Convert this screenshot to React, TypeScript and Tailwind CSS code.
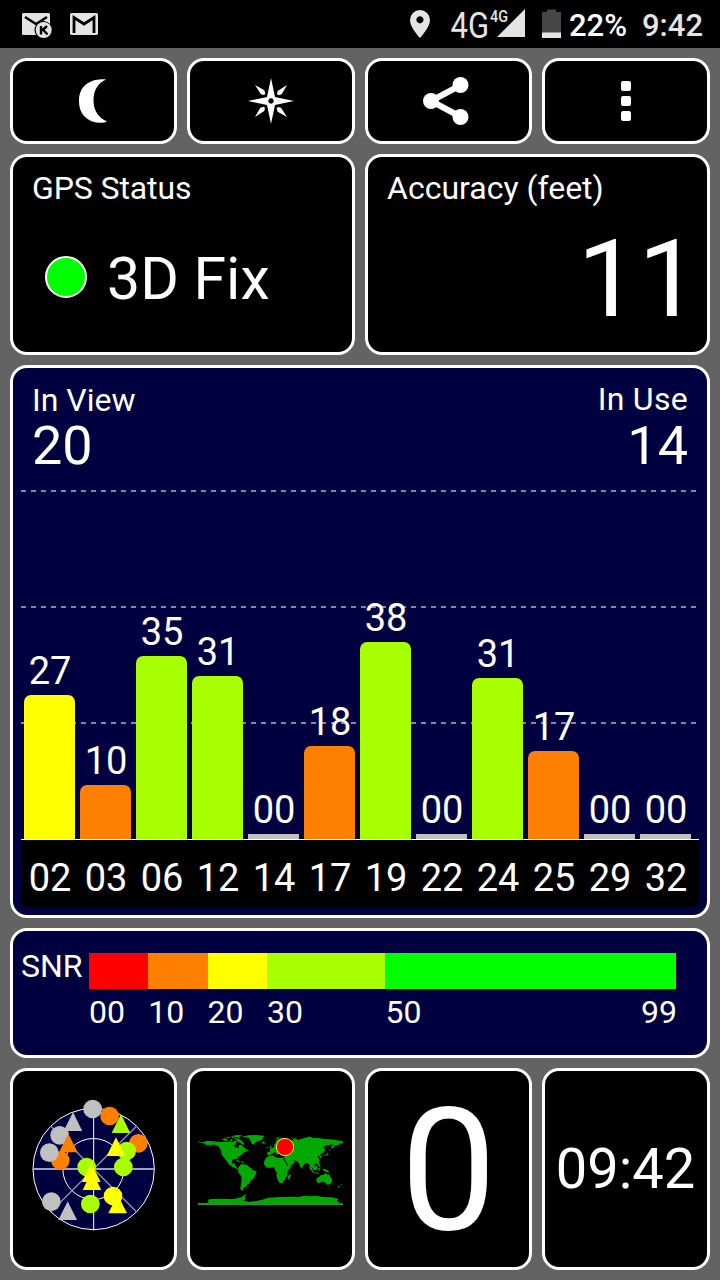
import type { ReactNode } from 'react';
import clsx from 'clsx';

const satellites = [
  { id: '02', snr: '27', height: 144, color: 'bg-[#ffff00]' },
  { id: '03', snr: '10', height: 54, color: 'bg-[#ff8000]' },
  { id: '06', snr: '35', height: 183, color: 'bg-[#a8ff00]' },
  { id: '12', snr: '31', height: 163, color: 'bg-[#a8ff00]' },
  { id: '14', snr: '00', height: 5, color: 'bg-[#c0c0c0]' },
  { id: '17', snr: '18', height: 93, color: 'bg-[#ff8000]' },
  { id: '19', snr: '38', height: 197, color: 'bg-[#a8ff00]' },
  { id: '22', snr: '00', height: 5, color: 'bg-[#c0c0c0]' },
  { id: '24', snr: '31', height: 161, color: 'bg-[#a8ff00]' },
  { id: '25', snr: '17', height: 88, color: 'bg-[#ff8000]' },
  { id: '29', snr: '00', height: 5, color: 'bg-[#c0c0c0]' },
  { id: '32', snr: '00', height: 5, color: 'bg-[#c0c0c0]' },
];

const snrScale = [
  { label: '00', span: 10, color: 'bg-[#ff0000]' },
  { label: '10', span: 10, color: 'bg-[#ff8000]' },
  { label: '20', span: 10, color: 'bg-[#ffff00]' },
  { label: '30', span: 20, color: 'bg-[#a8ff00]' },
  { label: '50', span: 49, color: 'bg-[#00ff00]' },
];

const skyDots = [
  { x: 181, y: 301, fill: '#ff8000' },
  { x: 179, y: 226, fill: '#c0c0c0' },
  { x: 148, y: 278, fill: '#c0c0c0' },
  { x: 329, y: 168, fill: '#ff8000' },
  { x: 278, y: 147, fill: '#c0c0c0' },
  { x: 415, y: 250, fill: '#ff8000' },
  { x: 380, y: 273, fill: '#a8ff00' },
  { x: 370, y: 321, fill: '#a8ff00' },
  { x: 260, y: 321, fill: '#a8ff00' },
  { x: 271, y: 432, fill: '#a8ff00' },
  { x: 339, y: 408, fill: '#ffff00' },
  { x: 154, y: 425, fill: '#c0c0c0' },
];

const skyTriangles = [
  { x: 219, y: 213, fill: '#c0c0c0' },
  { x: 205, y: 277, fill: '#ff8000' },
  { x: 363, y: 219, fill: '#a8ff00' },
  { x: 348, y: 288, fill: '#ffff00' },
  { x: 276, y: 390, fill: '#ffff00' },
  { x: 274, y: 366, fill: '#ffff00' },
  { x: 353, y: 460, fill: '#ffff00' },
  { x: 203, y: 480, fill: '#c0c0c0' },
];

function Panel({ children, className }: { children: ReactNode; className?: string }) {
  return (
    <div className={clsx('rounded-[17px] border-[3px] border-white overflow-hidden', className)}>
      {children}
    </div>
  );
}

function StatusBar() {
  return (
    <div className="flex h-12 bg-black">
      <svg className="w-[400px] h-12" viewBox="0 0 400 48">
        <rect x="22" y="13" width="28" height="22" rx="1.5" fill="#e4e4e4" />
        <path d="M25 17 L36 24 L47 17" fill="none" stroke="#000" strokeWidth="2.4" />
        <circle cx="43.5" cy="30" r="9" fill="#000" />
        <circle cx="43.7" cy="30" r="8" fill="#e4e4e4" />
        <path d="M41 26 V34.5 M47 26 L42 30.5 M43 29.5 L47.5 34.5" fill="none" stroke="#000" strokeWidth="2.4" />
        <rect x="70" y="13" width="28" height="22" rx="1.8" fill="#e4e4e4" />
        <path d="M74 33 V17.5 L84 24 L94 17.5 V33" fill="none" stroke="#000" strokeWidth="2.8" />
      </svg>
      <svg className="w-[166px] h-12" viewBox="400 0 166 48">
        <path
          d="M420 10 A10 10 0 0 0 410 20 C410 27.5 420 38 420 38 C420 38 430 27.5 430 20 A10 10 0 0 0 420 10 Z M420 16.2 A3.6 3.6 0 1 1 419.9 16.2 Z"
          fill="#e4e4e4"
          fillRule="evenodd"
        />
        <text x="450.5" y="38" fontSize="36" fill="#e4e4e4" textLength="38.5" lengthAdjust="spacingAndGlyphs">4G</text>
        <text x="490" y="22" fontSize="17" fontWeight="500" fill="#e4e4e4" textLength="18" lengthAdjust="spacingAndGlyphs">4G</text>
        <path d="M497 37 L525 9 V37 Z" fill="#e4e4e4" />
        <path d="M542 12 H547 V9.5 H556 V12 H561 V38 H542 Z" fill="#464646" />
        <rect x="542" y="32.5" width="19" height="5.5" fill="#e4e4e4" />
      </svg>
      <div className="flex gap-[13px] pl-[3px] text-[31px] leading-[51px] font-medium">
        <span className="w-[60px] text-white">22%</span>
        <span className="text-[#e4e4e4]">9:42</span>
      </div>
    </div>
  );
}

function MoonIcon() {
  return (
    <svg width="28" height="44" viewBox="0 0 28 44">
      <path d="M27 0.5 C22 -0.5 0 0 0 22 C0 44 22 46 28 42.5 C20 39 14.5 32 14.5 21.5 C14.5 11 19 4 27 0.5 Z" fill="#fff" />
    </svg>
  );
}

function CompassIcon() {
  return (
    <svg width="46" height="46" viewBox="-69 -69 138 138">
      <path
        d="M0 -69 L12 -12 L69 0 L12 12 L0 69 L-12 12 L-69 0 L-12 -12 Z M0 -8 A8 8 0 1 0 0.1 -8 Z"
        fill="#fff"
        fillRule="evenodd"
      />
      {[0, 90, 180, 270].map((angle) => (
        <path key={angle} d="M48 -48 L32 -20 L22 -17 L18 -21 L20 -30 Z" fill="#fff" transform={`rotate(${angle})`} />
      ))}
    </svg>
  );
}

function ShareIcon() {
  return (
    <svg width="46" height="48" viewBox="0 0 46 48">
      <path d="M38 8 L8 24 L38 40" fill="none" stroke="#fff" strokeWidth="6" />
      <circle cx="37.5" cy="8" r="8" fill="#fff" />
      <circle cx="8" cy="24" r="8" fill="#fff" />
      <circle cx="37.5" cy="40" r="8" fill="#fff" />
    </svg>
  );
}

function MoreIcon() {
  return (
    <div className="flex flex-col gap-[5px]">
      <span className="size-[10px] rounded-[2px] bg-white" />
      <span className="size-[10px] rounded-[2px] bg-white" />
      <span className="size-[10px] rounded-[2px] bg-white" />
    </div>
  );
}

function SkyView() {
  return (
    <svg className="w-[161px] h-[196px]" viewBox="39 33 483 588">
      <circle cx="281" cy="327" r="182" fill="#000040" stroke="#fff" strokeWidth="3" />
      <circle cx="280" cy="327" r="91.5" fill="none" stroke="#fff" strokeWidth="3" />
      <path d="M98 327 H464" stroke="#a0a0c0" strokeWidth="6" />
      <path d="M281 145 V511" stroke="#fff" strokeWidth="3" />
      <path d="M152 198 L410 456 M410 198 L152 456" stroke="#9090b0" strokeWidth="4" />
      {skyDots.map((dot) => (
        <circle key={`${dot.x}-${dot.y}`} cx={dot.x} cy={dot.y} r="28" fill={dot.fill} />
      ))}
      {skyTriangles.map((t) => (
        <path key={`${t.x}-${t.y}`} d={`M${t.x} ${t.y - 56} l28 56 h-56 Z`} fill={t.fill} />
      ))}
    </svg>
  );
}

function WorldMap() {
  return (
    <svg className="w-[161px] h-[196px]" viewBox="15 -117 483 588">
      <g fill="#00a800">
        {/* North and Central America */}
        <path d="M39 90 L42 95 L56 97 L62 93 L76 93 L100 95 L124 96 L138 94 L146 97 L150 90 L156 96 L150 104 L146 107 L152 112 L160 114 L162 104 L170 105 L176 112 L181 115 L187 123 L178 127 L172 132 L160 141 L155 148 L152 146 L142 149 L140 158 L145 161 L151 159 L149 165 L154 168 L155 173 L164 177 L158 178 L149 173 L138 168 L131 162 L125 153 L120 146 L111 136 L108 120 L100 109 L90 104 L80 104 L70 109 L74 104 L58 107 L64 102 L56 100 L40 97 Z" />
        {/* Arctic islands */}
        <path d="M110 88 l8 -3 l9 2 l3 4 l-10 2 Z M122 81 l10 -1 l4 3 l-10 1 Z M137 81 l8 -2 l5 3 l-7 3 Z M137 88 h6 l-1 4 l-7 1 Z M148 84 l12 2 l8 5 l6 6 l5 6 l-7 1 l-6 -6 l-8 -3 l-5 -6 Z M143 77 l14 -2 l15 1 l-7 4 l-5 4 l-8 -2 Z" />
        <path d="M170 80 l20 -4 l24 -1 l24 2 l-4 8 l-5 5 l-9 4 l-9 3 l-5 7 l-4 -1 l-5 -8 l-2 -7 l-6 -5 Z M230 96 l9 -1 l1 4 l-7 2 Z" />
        <path d="M151 151 l8 0 l8 4 h-7 Z M168 154 l9 1 v3 l-9 -1 Z M181 119 l9 0 l1 4 l-8 1 Z" />
        {/* South America */}
        <path d="M161 172 L165 165 L172 162 L187 165 L193 172 L201 176 L202 180 L214 184 L215 188 L209 197 L206 206 L197 212 L192 221 L186 224 L184 230 L178 232 L174 236 L176 242 L168 240 L166 234 L169 216 L170 200 L162 190 L159 181 Z" />
        {/* Europe and Asia */}
        <path d="M247 135 V125 L256 125 L254 118 L262 114 L268 110 L267 104 L271 102 L272 93 L281 86 L291 83 L298 87 L306 92 L326 90 L330 86 L340 90 L348 87 L366 82 L374 80 L386 84 L400 84 L416 87 L436 88 L455 91 L474 94 V100 L462 101 L465 104 L451 106 L446 112 L440 117 L438 111 L446 104 L436 104 L424 106 L415 112 L420 118 L418 126 L408 131 L406 136 L410 143 L406 145 L402 137 L396 138 L401 143 L404 151 L399 158 L388 163 L391 171 L386 178 L380 171 L382 180 L386 188 L381 184 L377 173 L373 163 L367 158 L359 162 L352 171 L349 177 L345 168 L342 159 L335 153 L324 151 L330 155 L325 162 L315 167 L310 168 L302 154 L297 143 L298 136 L286 135 L283 130 L278 136 L270 127 L263 130 L257 134 Z" />
        <path d="M253 106 l5 2 l3 7 l-7 2 l2 -5 Z M247 110 l4 1 l-2 4 h-3 Z M270 84 l10 -2 l5 2 l-8 3 Z M365 81 l12 -1 l4 3 h-10 Z M409 86 h12 v2 h-10 Z M320 88 l8 -4 l9 -1 l-10 5 Z" />
        {/* Africa */}
        <path d="M246 140 L264 136 L270 141 L279 143 L294 143 L298 152 L305 164 L309 168 L319 167 L314 177 L307 186 L308 196 L302 202 L299 211 L291 219 L283 219 L278 208 L274 196 L276 188 L270 180 L268 172 L256 173 L246 173 L237 163 L238 152 Z" />
        <path d="M316 192 l2 5 l-5 11 l-4 -1 l1 -10 Z" />
        {/* Islands and Australia */}
        <path d="M371 168 l7 6 l7 9 l-3 2 l-9 -10 Z M387 173 l8 -6 l3 3 l-4 11 l-7 -1 Z M399 174 l8 0 l-4 3 l2 6 l-4 -1 Z M412 176 l8 2 l8 3 l6 7 l-9 -2 l-9 -3 Z M384 186 l14 2 l8 1 l-8 2 l-14 -3 Z M398 154 l4 2 l1 7 l5 7 l-5 1 l-6 -10 Z M429 127 l2 5 l-6 5 l-9 2 l9 -6 Z M431 119 l7 0 l-5 5 Z" />
        <path d="M394 206 L402 201 L409 194 L416 195 L420 190 L426 191 L427 197 L432 191 L436 201 L441 207 V215 L435 223 L427 224 L421 218 L413 215 L402 219 L395 217 Z M428 227 h5 l-2 4 Z" />
        <path d="M468 221 l3 3 l-5 4 Z M463 227 l3 2 l-6 5 l-3 -1 Z" />
        {/* Antarctica */}
        <path d="M39 285 V279 H66 L72 275 L67 271 L76 267 L110 266 L145 267 L160 264 L170 262 L177 255 L185 252 L179 260 L183 266 L176 272 L194 275 L216 273 L236 268 L250 263 L285 261 L320 260 L342 261 L356 257 L374 259 L394 258 L418 261 L440 262 L461 267 L456 272 L463 277 L460 280 H474 V285 Z" />
      </g>
      <path d="M39 283 H474" stroke="#1f9a1f" strokeWidth="4" />
      <circle cx="300" cy="111" r="26" fill="#ff0000" stroke="#ffe040" strokeWidth="3" />
    </svg>
  );
}

export default function App() {
  return (
    <div className="w-[720px] h-[1280px] overflow-hidden bg-[#636363] text-white font-['Roboto',sans-serif]">
      <StatusBar />

      <div className="grid grid-cols-[167px_168px_167px_168px] grid-rows-[86px_201px_553px_130px_202px] gap-[10px] p-[10px]">
        <Panel className="flex items-center justify-center bg-black pr-[2px]">
          <MoonIcon />
        </Panel>
        <Panel className="flex items-center justify-center bg-black">
          <CompassIcon />
        </Panel>
        <Panel className="flex items-center justify-center bg-black pr-[5px]">
          <ShareIcon />
        </Panel>
        <Panel className="flex items-center justify-center bg-black">
          <MoreIcon />
        </Panel>

        <Panel className="col-span-2 bg-black pl-[19px] pt-[15px]">
          <h2 className="text-[32px] leading-8 tracking-[-0.1px]">GPS Status</h2>
          <div className="flex items-start gap-[20px] mt-[45px] ml-[13px]">
            <span className="size-[42px] mt-[7px] rounded-full border-2 border-white bg-[#00ff00]" />
            <span className="text-[59px] leading-[60px]">3D Fix</span>
          </div>
        </Panel>
        <Panel className="col-span-2 bg-black pl-[19px] pt-[15px]">
          <h2 className="text-[32px] leading-8">Accuracy (feet)</h2>
          <div className="mt-[20px] pr-[8px] text-right text-[108px] leading-[110px]">11</div>
        </Panel>

        <Panel className="col-span-4 bg-[#000040] px-2 pt-4">
          <div className="flex justify-between pl-[11px] pr-[11px]">
            <div>
              <h2 className="text-[32px] leading-8">In View</h2>
              <div className="mt-[2px] text-[54px] leading-[56px]">20</div>
            </div>
            <div className="text-right">
              <h2 className="text-[32px] leading-[30px] tracking-[0.3px]">In Use</h2>
              <div className="mt-[4px] text-[54px] leading-[56px]">14</div>
            </div>
          </div>

          <div className="relative mt-4 h-[350px] border-b border-white">
            {['top-0', 'top-[116px]', 'top-[232px]'].map((top) => (
              <div
                key={top}
                className={clsx(
                  'absolute left-0 w-[675px] h-[2px] bg-[repeating-linear-gradient(90deg,#8484b0_0px,#8484b0_5px,transparent_5px,transparent_10px)]',
                  top
                )}
              />
            ))}
            <div className="relative flex h-full items-end pl-px">
              {satellites.map((sat) => (
                <div key={sat.id} className="w-[56px]">
                  <div className="mb-[5px] text-center text-[38px] leading-[38px]">{sat.snr}</div>
                  <div
                    className={clsx('ml-[2px] w-[51px]', sat.color, sat.height > 5 && 'rounded-t-[7px]')}
                    style={{ height: sat.height }}
                  />
                </div>
              ))}
            </div>
          </div>
          <div className="flex h-[67px] bg-black pl-px pt-[5px]">
            {satellites.map((sat) => (
              <div key={sat.id} className="w-[56px] text-center text-[38px] leading-[67px]">
                {sat.id}
              </div>
            ))}
          </div>
        </Panel>

        <Panel className="col-span-4 flex bg-[#000040] pl-2 pt-[22px]">
          <div className="w-[68px] text-[32px] leading-[27px]">SNR</div>
          <div className="w-[587px]">
            <div className="flex h-9">
              {snrScale.map((step) => (
                <div key={step.label} className={step.color} style={{ flex: step.span }} />
              ))}
            </div>
            <div className="relative flex pt-[7px] text-[32px] leading-8">
              {snrScale.map((step) => (
                <div key={step.label} style={{ flex: step.span }}>
                  {step.label}
                </div>
              ))}
              <span className="absolute -right-px">99</span>
            </div>
          </div>
        </Panel>

        <Panel className="bg-black">
          <SkyView />
        </Panel>
        <Panel className="bg-black">
          <WorldMap />
        </Panel>
        <Panel className="flex items-center justify-center bg-black pt-[3px] text-[171px] leading-none">0</Panel>
        <Panel className="flex items-center justify-center bg-black pr-px text-[56px] leading-none">09:42</Panel>
      </div>
    </div>
  );
}
